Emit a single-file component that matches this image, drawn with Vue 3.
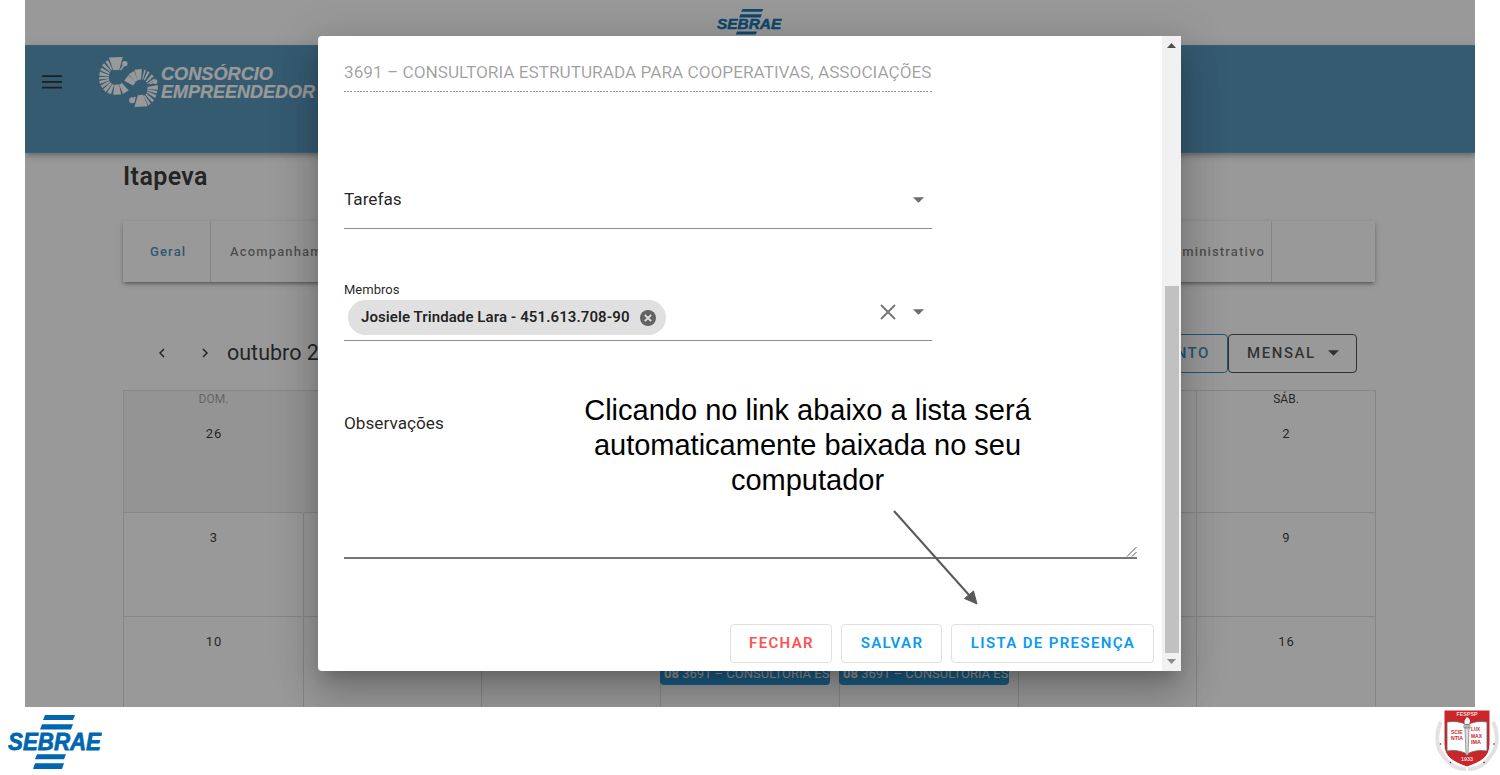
<script setup>
const weekdays = ['DOM.', 'SEG.', 'TER.', 'QUA.', 'QUI.', 'SEX.', 'SÁB.']
const weeks = [
  [26, 27, 28, 29, 30, 1, 2],
  [3, 4, 5, 6, 7, 8, 9],
  [10, 11, 12, 13, 14, 15, 16]
]
const eventDays = [13, 14]

// Rays of the two rings: [angle, inner width, outer width, inner radius, outer radius]
const ringA = [
  [-92, 18, 42, 22, 60], [-121, 4, 9, 26, 57], [-136, 4, 9, 25, 56], [-152, 5, 9, 24, 53], [-168, 5, 12, 23, 52],
  [177, 5, 8, 23, 52], [163, 5, 9, 23, 53], [148, 5, 9, 24, 53], [132, 6, 11, 24, 54], [115, 6, 13, 24, 53],
  [88, 14, 24, 22, 52], [58, 10, 20, 23, 53]
]
const ringB = [
  [-143, 12, 21, 22, 52], [-119, 9, 19, 24, 54], [-96, 11, 22, 26, 57], [-75, 3, 5, 28, 57], [-63, 4, 7, 28, 56],
  [-46, 4, 9, 26, 54], [-32, 3, 5, 25, 50], [-3, 6, 14, 22, 53], [13, 4, 8, 22, 52],
  [28, 4, 9, 23, 53], [45, 4, 9, 24, 55], [60, 4, 8, 25, 56], [87, 16, 40, 20, 55]
]
function ray(cx, cy, [deg, w1, w2, r1, r2]) {
  const a = (deg * Math.PI) / 180
  const c = Math.cos(a)
  const s = Math.sin(a)
  const p = (r, w) => `${(cx + r * c - w * s).toFixed(1)},${(cy + r * s + w * c).toFixed(1)}`
  return [p(r1, -w1 / 2), p(r1, w1 / 2), p(r2, w2 / 2), p(r2, -w2 / 2)].join(' ')
}
</script>

<template>
  <div class="slide">
    <div class="app">
      <div class="brandbar">
        <svg class="sebrae-small" viewBox="0 0 94 54" preserveAspectRatio="none">
          <g fill="#0067ae">
            <path d="M37 0H67L65 5H35ZM34 9.300H65L63 14.600H32ZM29 39.300H58L56 44.300H27ZM27 48.300H56L54 54H25Z" />
            <text x="0" y="35.300" textLength="93" lengthAdjust="spacingAndGlyphs" class="sebrae-text">SEBRAE</text>
          </g>
        </svg>
      </div>
      <header class="topbar">
        <svg class="menu" viewBox="0 0 20 14"><path d="M0 1.200H20M0 6.900H20M0 12.600H20" stroke="#1c1c1c" stroke-width="1.800" /></svg>
        <svg class="rings" viewBox="40 33 182 156">
          <g fill="#fff">
            <polygon v-for="(r, i) in ringA" :key="'a' + i" :points="ray(95, 97, r)" />
            <polygon v-for="(r, i) in ringB" :key="'b' + i" :points="ray(166, 130, r)" />
            <circle cx="120" cy="56" r="8" /><circle cx="211" cy="110" r="7" /><circle cx="142" cy="166" r="9" />
          </g>
          <path d="M107 75L119 58M195 116L210 110M152 156L142 168" stroke="#fff" stroke-width="5" />
        </svg>
        <svg class="wordmark" viewBox="0 0 156 36">
          <text x="0" y="15.500" textLength="112" lengthAdjust="spacingAndGlyphs">CONSÓRCIO</text>
          <text x="0" y="33.500" textLength="154" lengthAdjust="spacingAndGlyphs">EMPREENDEDOR</text>
        </svg>
      </header>
      <main>
        <h1>Itapeva</h1>
        <nav class="tabs">
          <span class="tab active">Geral</span>
          <span class="tab second">Acompanhamento</span>
          <span class="tab last">Administrativo</span>
          <span class="tab blank"></span>
        </nav>
        <div class="toolbar">
          <svg class="chev" viewBox="0 0 6 10"><path d="M5 1L1 5L5 9" /></svg>
          <svg class="chev next" viewBox="0 0 6 10"><path d="M1 1L5 5L1 9" /></svg>
          <span class="month">outubro 2021</span>
          <span class="btn event-btn">EVENTO</span>
          <span class="btn mode-btn">MENSAL <i class="caret"></i></span>
        </div>
        <div class="calendar">
          <div v-for="(week, w) in weeks" :key="w" class="week">
            <div v-for="(day, d) in week" :key="d" class="day" :class="{ outside: w === 0 && d < 5 }">
              <div v-if="w === 0" class="weekday">{{ weekdays[d] }}</div>
              <div class="num">{{ day }}</div>
              <div v-if="eventDays.includes(day)" class="event"><b>08</b> 3691 – CONSULTORIA ESTRUTURADA</div>
            </div>
          </div>
        </div>
      </main>
      <div class="scrim"></div>

      <section class="dialog">
        <div class="form">
          <div class="field disabled"><span>3691 – CONSULTORIA ESTRUTURADA PARA COOPERATIVAS, ASSOCIAÇÕES</span></div>
          <div class="field tasks"><span>Tarefas</span><i class="caret"></i></div>
          <div class="field members">
            <label>Membros</label>
            <div class="member-row">
              <div class="chip">
                <span>Josiele Trindade Lara - 451.613.708-90</span>
                <svg viewBox="0 0 16 16"><circle cx="8" cy="8" r="8" fill="#626262" /><path d="M4.800 4.800L11.200 11.200M11.200 4.800L4.800 11.200" stroke="#e0e0e0" stroke-width="1.900" /></svg>
              </div>
              <svg class="clear" viewBox="0 0 16 16"><path d="M1 1L15 15M15 1L1 15" stroke="#757575" stroke-width="1.900" /></svg>
              <i class="caret"></i>
            </div>
          </div>
          <div class="notes">
            <span>Observações</span>
            <svg viewBox="0 0 11 11"><path d="M1 10.500L10.500 1M6 10.500L10.500 6" stroke="#555" stroke-width="1" /></svg>
          </div>
          <div class="actions">
            <button class="close">FECHAR</button>
            <button class="save">SALVAR</button>
            <button class="list">LISTA DE PRESENÇA</button>
          </div>
        </div>
        <div class="scrollbar">
          <svg class="up" viewBox="0 0 9 5"><path d="M0 5L4.500 0L9 5Z" fill="#505050" /></svg>
          <div class="thumb"></div>
          <svg class="down" viewBox="0 0 9 5"><path d="M0 0H9L4.500 5Z" fill="#8b8b8b" /></svg>
        </div>
      </section>
    </div>

    <p class="note">Clicando no link abaixo a lista será<br />automaticamente baixada no seu<br />computador</p>
    <svg class="arrow" viewBox="0 0 90 100">
      <path d="M4 6L79 90" stroke="#595959" stroke-width="2" />
      <path d="M87 99L74.500 93.500L83.500 86Z" fill="#595959" stroke="#595959" />
    </svg>

    <footer>
      <svg class="sebrae" viewBox="0 0 94 54" preserveAspectRatio="none">
        <g fill="#0067ae">
          <path d="M37 0H67L65 5H35ZM34 9.300H65L63 14.600H32ZM29 39.300H58L56 44.300H27ZM27 48.300H56L54 54H25Z" />
          <text x="0" y="35.300" textLength="93" lengthAdjust="spacingAndGlyphs" class="sebrae-text">SEBRAE</text>
        </g>
      </svg>
      <svg class="shield" viewBox="0 0 64 65">
        <g fill="none" stroke="#e2e2e2" stroke-width="4">
          <path d="M6 14C0 26 2 40 7 46C14 57 21 61 31 61" />
          <path d="M58 14C64 26 62 40 57 46C50 57 43 61 33 61" />
        </g>
        <g fill="#333"><circle cx="5.500" cy="36" r=".8" /><circle cx="59" cy="36" r=".8" /><circle cx="15.500" cy="54.500" r=".8" /><circle cx="49" cy="54.500" r=".8" /></g>
        <path d="M9 2H55V36C55 49 46 54 32 59C18 54 9 49 9 36Z" fill="#c9252b" stroke="#fff" stroke-width="1" />
        <path d="M12 14Q23 12 32 17Q41 12 52 14V43Q41 41 32 46Q23 41 12 43Z" fill="#fff" stroke="#666" stroke-width=".8" />
        <path d="M30 19H34L33 47H31ZM29 17H35V20H29Z" fill="#ddd" stroke="#777" stroke-width=".7" />
        <path d="M32 9Q37 12 34 16H30Q28 13 32 9Z" fill="#f3f3f3" />
        <g fill="#c9252b" font-size="5.500">
          <text x="16" y="26" textLength="11.500" lengthAdjust="spacingAndGlyphs">SCIE</text>
          <text x="16" y="32" textLength="12" lengthAdjust="spacingAndGlyphs">NTIA</text>
          <text x="36" y="23" textLength="9" lengthAdjust="spacingAndGlyphs">LUX</text>
          <text x="36" y="29.500" textLength="11" lengthAdjust="spacingAndGlyphs">MAX</text>
          <text x="36" y="36" textLength="10" lengthAdjust="spacingAndGlyphs">IMA</text>
        </g>
        <g fill="#f5dcdc" font-size="5">
          <text x="21.500" y="8" textLength="21" lengthAdjust="spacingAndGlyphs">FESPSP</text>
          <text x="26" y="53" textLength="12" lengthAdjust="spacingAndGlyphs">1933</text>
        </g>
      </svg>
    </footer>
  </div>
</template>

<style>
body { margin: 0; background: #fff; }
</style>

<style scoped>
* { box-sizing: border-box; }
.slide { position: relative; width: 1500px; height: 775px; overflow: hidden; font-family: Roboto, sans-serif; color: rgba(0, 0, 0, .87); }
.app { position: relative; width: 1450px; height: 707px; margin-left: 25px; overflow: hidden; background: #fff; }
.scrim { position: absolute; inset: 0; background: rgba(33, 33, 33, .46); z-index: 2; }
.brandbar { height: 45px; padding: 9px 0 0 692px; }
.sebrae-small { display: block; width: 65px; height: 31px; }
.sebrae-text { font: italic bold 24px "Liberation Sans", sans-serif; stroke: #0067ae; stroke-width: .8px; }
.topbar { height: 108px; display: flex; align-items: flex-start; background: #468cb5; border-bottom: 1px solid #4f9ac6; border-top: 1px solid #4f9ac6; box-shadow: 0 2px 4px -1px rgba(0, 0, 0, .2), 0 4px 5px rgba(0, 0, 0, .14), 0 1px 10px rgba(0, 0, 0, .12); }
.menu { width: 20px; height: 14px; margin: 29px 0 0 17px; }
.rings { width: 61px; height: 52px; margin: 10px 0 0 36px; }
.wordmark { width: 156px; height: 36px; margin: 18px 0 0 2px; }
.wordmark text { font: italic bold 17.500px "Liberation Sans", sans-serif; fill: #fff; stroke: #fff; stroke-width: .2px; }
main { padding-left: 98px; }
h1 { margin: 8px 0 0; height: 32px; line-height: 32px; font-size: 25px; font-weight: 600; letter-spacing: .4px; }
.tabs { display: flex; width: 1252px; height: 61px; margin-top: 28px; box-shadow: 0 3px 3px -2px rgba(0, 0, 0, .3), 0 2px 5px rgba(0, 0, 0, .3); }
.tab { display: flex; align-items: center; font-size: 13px; font-weight: 500; letter-spacing: 1.150px; color: rgba(0, 0, 0, .57); border-right: 1px solid #ddd; }
.tab.active { width: 88px; padding-left: 27px; color: #3a87bb; }
.tab.second { width: 600px; padding-left: 19px; border: 0; }
.tab.last { width: 461px; justify-content: flex-end; padding-right: 6px; }
.tab.blank { flex: 1; border: 0; }
.toolbar { display: flex; align-items: center; width: 1252px; height: 40px; margin-top: 51px; padding: 0 18px 0 36px; }
.chev { width: 6px; height: 10px; fill: none; stroke: #222; stroke-width: 1.500; }
.chev.next { margin-left: 37px; }
.month { margin-left: 19px; font-size: 21.500px; margin-right: auto; line-height: 24px; padding-bottom: 1px; }
.btn { height: 39px; border: 1px solid; border-radius: 4px; font-size: 15px; font-weight: 500; letter-spacing: 1.550px; display: flex; align-items: center; justify-content: space-between; padding: 0 17px 0 18px; }
.event-btn { color: #2684b8; }
.mode-btn { width: 129px; color: rgba(0, 0, 0, .75); }
.caret { width: 11px; height: 5.500px; background: currentColor; clip-path: polygon(0 0, 100% 0, 50% 100%); }
.calendar { width: 1253px; margin-top: 17px; border-left: 1px solid #dcdcdc; border-top: 1px solid #dcdcdc; }
.week { display: grid; grid-template-columns: 180px 178px 179px 179px 179px 178px 179px; height: 104px; }
.week:first-child { height: 122px; }
.day { border-right: 1px solid #dcdcdc; border-bottom: 1px solid #dcdcdc; font-size: 13px; text-align: center; padding-top: 16px; }
.week:first-child .day { padding-top: 1px; }
.day.outside { background: #f5f5f5; border-right-color: #f5f5f5; }
.weekday { height: 14px; line-height: 14px; font-size: 12px; margin-bottom: 19px; }
.outside .weekday { color: rgba(0, 0, 0, .38); }
.num { height: 18px; line-height: 18px; letter-spacing: 1px; padding-left: 1px; }
.event { margin: 12px 0 0 -1px; width: 170px; height: 22px; border-radius: 4px; background: #148fd6; color: #fff; font-size: 13px; line-height: 22px; padding-left: 4px; text-align: left; white-space: nowrap; overflow: hidden; }
.event b { font-weight: 700; }

.dialog { position: absolute; left: 293px; top: 36px; width: 863px; height: 635px; display: flex; background: #fff; border-radius: 4px 0 0 4px; box-shadow: 0 11px 15px -7px rgba(0, 0, 0, .2), 0 24px 38px 3px rgba(0, 0, 0, .14), 0 9px 46px 8px rgba(0, 0, 0, .12); z-index: 3; }
.form { width: 844px; padding-left: 26px; }
.field { width: 588px; font-size: 17.200px; border-bottom: 1px solid #8d8d8d; display: flex; }
.disabled { margin-top: 18px; height: 38px; border: 0; color: rgba(0, 0, 0, .38); line-height: 37px; white-space: nowrap; overflow: hidden; background: repeating-linear-gradient(90deg, #999 0 2px, transparent 2px 3.200px) left bottom / 100% 1px no-repeat; }
.tasks { margin-top: 78px; height: 59px; align-items: center; justify-content: space-between; padding-right: 8px; }
.tasks span { margin-top: -1px; }
.tasks .caret { margin-top: 2px; }
.field .caret { color: #6c6c6c; }
.members { margin-top: 52px; height: 60px; flex-direction: column; }
label { font-size: 13px; line-height: 17px; height: 19px; }
.member-row { display: flex; align-items: center; height: 35px; padding: 0 8px 0 4px; }
.chip { display: flex; align-items: center; justify-content: space-between; width: 318px; height: 35px; border-radius: 18px; background: #e0e0e0; padding: 0 10px 0 13px; font-size: 15px; font-weight: 600; letter-spacing: .08px; white-space: nowrap; margin-right: auto; }
.chip span { margin-top: -2px; }
.chip svg { width: 16px; height: 16px; }
.clear { width: 16px; height: 16px; margin: -11px 17px 0 0; }
.member-row .caret { margin-top: -11px; }
.notes { display: flex; justify-content: space-between; width: 793px; height: 158px; margin-top: 60px; padding-top: 11px; border-bottom: 2px solid #757575; font-size: 17.200px; line-height: 22px; }
.notes svg { width: 11px; height: 11px; align-self: flex-end; }
.actions { display: flex; justify-content: flex-end; gap: 9px; margin-top: 65px; padding-right: 8px; }
button { height: 39px; padding: 0 0 2px 1px; border: 1px solid #e0e0e0; border-radius: 4px; background: #fff; font: 600 15px Roboto, sans-serif; letter-spacing: 1.350px; color: #0b9bf0; }
.close { width: 102px; color: #ff5252; }
.save { width: 101px; }
.list { width: 203px; }
.scrollbar { display: flex; flex-direction: column; align-items: center; width: 19px; background: #f1f1f1; }
.scrollbar svg { width: 9px; height: 5px; }
.up { margin-top: 7px; }
.thumb { width: 14px; height: 367px; margin-top: 238px; background: #c1c1c1; }
.down { margin-top: 6px; }

.note { position: absolute; left: 557.5px; top: 393px; width: 500px; margin: 0; z-index: 4; text-align: center; color: #000; font: 29px/35px "Liberation Sans", Arial, sans-serif; }
.arrow { position: absolute; left: 890px; top: 505px; width: 90px; height: 100px; z-index: 4; }
footer { display: flex; justify-content: space-between; height: 68px; padding: 0 1px 0 8px; }
.sebrae { width: 94px; height: 54px; margin-top: 8px; }
.shield { width: 64px; height: 65px; margin-top: 1px; font-family: "Liberation Sans", sans-serif; font-weight: bold; }
</style>
